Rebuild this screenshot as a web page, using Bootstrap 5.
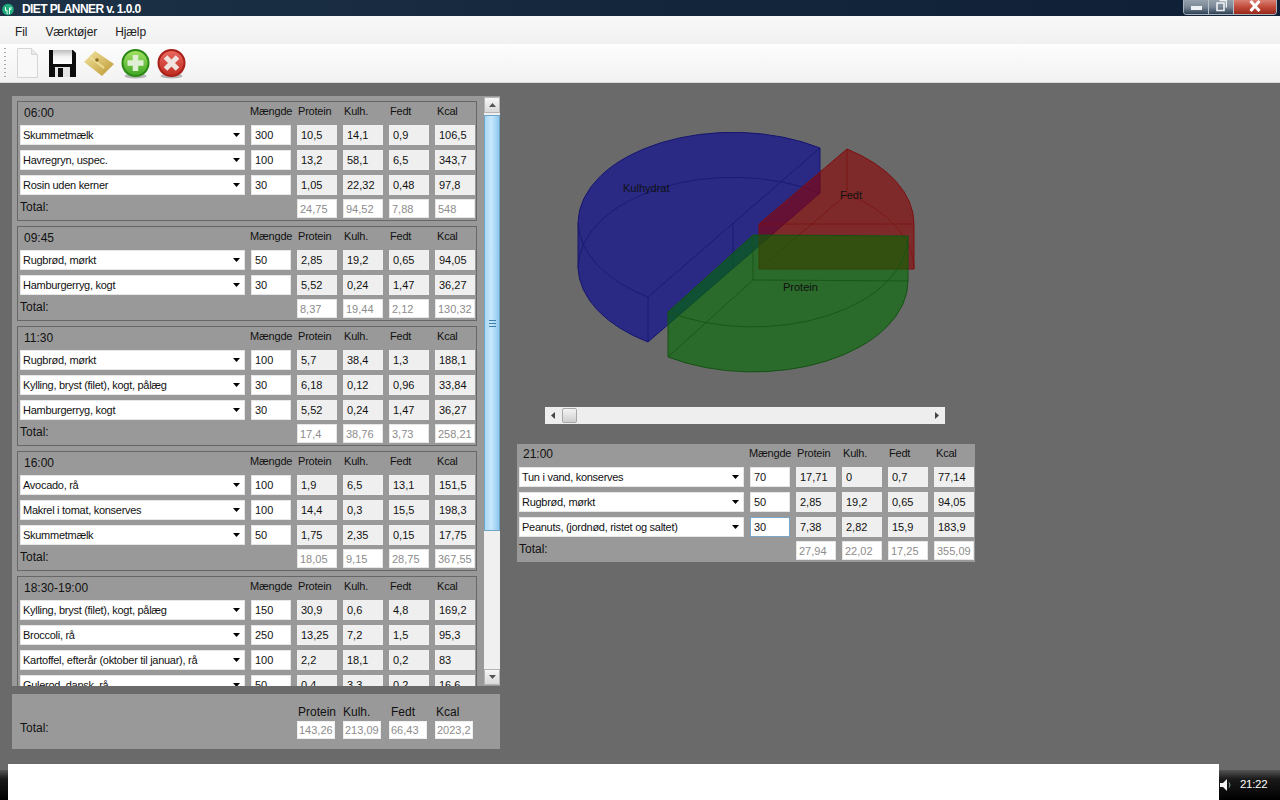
<!DOCTYPE html>
<html lang="da">

<head>
  <meta charset="UTF-8" />
  <title>DIET PLANNER v. 1.0.0</title>
  <link href="https://cdn.jsdelivr.net/npm/bootstrap@5.3.3/dist/css/bootstrap.min.css" rel="stylesheet">

  <style>
    body {
      width: 1280px;
      height: 800px;
      overflow: hidden;
      background-color: #6a6a6a;
      font-family: "Liberation Sans", Arial, sans-serif;
      font-size: 11px;
      color: #111;
    }

    /* window chrome */
    .title-strip {
      height: 16px;
      background: linear-gradient(90deg, #1d3246, #14263c 50%, #0f2036);
      color: #fff;
      font-size: 12px;
      font-weight: 700;
      letter-spacing: -.6px;
      line-height: 18px;
      padding-left: 2px;
    }

    .win-btns {
      height: 15px;
      margin-right: 3px;
      border: 1px solid #a9b2bb;
      border-top: 0;
      border-radius: 0 0 4px 4px;
      overflow: hidden;
    }

    .win-btn {
      width: 25px;
      background: linear-gradient(#95a0ab, #7b8896 50%, #2f4156);
      border-right: 1px solid #b8c0c8;
    }

    .win-close {
      width: 42px;
      border-right: 0;
      background: linear-gradient(#d98073, #c24b3a 50%, #98281b);
    }

    .menu-strip {
      height: 28px;
      background: linear-gradient(#f8f8f8, #f1f1f1);
      font-size: 12px;
      letter-spacing: -.1px;
      padding: 4px 0 0 15px;
      gap: 18px;
      color: #222;
    }

    .tool-strip {
      height: 39px;
      padding-left: 4px;
      background: linear-gradient(#fdfdfd, #f2f2f2);
      border-bottom: 1px solid #d8d8d8;
    }

    .tool-grip {
      width: 2px;
      height: 30px;
      margin-right: 10px;
      background: repeating-linear-gradient(#a8a8a8 0 1px, transparent 1px 4px);
    }

    .tool-gap {
      margin-right: 6px;
    }

    /* panels */
    .main-area {
      height: 687px;
      padding: 13px 0 0 12px;
    }

    .meal-scroll {
      width: 488px;
      height: 590px;
      background: #999;
      overflow: hidden;
    }

    .meal-list {
      width: 471px;
      padding: 5px 0 0 5px;
    }

    .meal-box {
      width: 460px;
      margin-bottom: 5px;
      padding: 0 1px 2px 2px;
      border: 1px solid #676767;
    }

    .meal-open {
      width: 458px;
      height: 118px;
      padding: 0 0 1px 2px;
      background: #999;
    }

    .meal-head,
    .meal-row {
      display: grid;
      grid-template-columns: 225px repeat(5, 40px);
      column-gap: 6px;
    }

    .meal-head {
      height: 23px;
      line-height: 18px;
      letter-spacing: -.2px;
      white-space: nowrap;
    }

    .meal-head span+span {
      padding-left: 1px;
    }

    .meal-head span:nth-child(2) {
      margin-left: -2px;
    }

    .meal-head span:last-child {
      padding-left: 2px;
    }

    .time-label {
      font-size: 12px;
      letter-spacing: 0;
      line-height: 23px;
      padding-left: 4px;
    }

    .meal-open .time-label {
      line-height: 21px;
    }

    .meal-row {
      margin-bottom: 5px;
    }

    .meal-total {
      margin-top: -1px;
      margin-bottom: 0;
    }

    .total-label {
      font-size: 12px;
      line-height: 17px;
    }

    .food-pick,
    .num-cell {
      height: 20px;
      padding: 0 3px;
      border: 1px solid #e6e6e6;
      border-radius: 0;
      font-size: 11px;
      line-height: 18px;
      color: #111;
      box-shadow: none;
    }

    .food-pick {
      padding: 0 14px 0 2px;
      letter-spacing: -.28px;
      background-color: #fff;
      background-image: url("data:image/svg+xml,%3Csvg xmlns='http://www.w3.org/2000/svg' width='7' height='4'%3E%3Cpath d='M0 0h7L3.500 4z'/%3E%3C/svg%3E");
      background-size: 7px 4px;
      background-position: right 4px center;
      background-repeat: no-repeat;
    }

    .num-cell {
      background: #fff;
    }

    .num-cell.calc {
      background: #efefef;
      border-color: #f0f0f0;
    }

    .num-cell.sum,
    .grand-cell {
      height: 19px;
      padding: 0 2px;
      background: #fff;
      color: #8c8c8c;
    }

    .num-cell.active {
      border-color: #7aa6c9;
    }

    /* scroll bars */
    .v-scroll {
      width: 16px;
      height: 588px;
      margin: 1px 0 0 1px;
      background: #f0f0f0;
    }

    .scroll-btn {
      height: 16px;
      background: linear-gradient(#f7f7f7, #d9d9d9);
      border: 1px solid #b5b5b5;
      color: #555;
    }

    .v-thumb {
      height: 416px;
      margin-top: 2px;
      background: linear-gradient(90deg, #a9d7f4, #c7e7fb 45%, #8fc8ee);
      border: 1px solid #6fa5c8;
    }

    .h-scroll {
      width: 400px;
      height: 17px;
      margin: 14px 0 20px 28px;
      background: #eeeeee;
      color: #333;
      padding: 0 6px;
    }

    .h-thumb {
      width: 15px;
      height: 15px;
      margin-left: 7px;
      border: 1px solid #a8a8a8;
      border-radius: 2px;
      background: linear-gradient(#f4f4f4, #cfcfcf);
    }

    .grand-box {
      width: 488px;
      height: 55px;
      margin-top: 8px;
      padding: 10px 0 0 8px;
      background: #999;
      font-size: 12px;
    }

    .grand-grid {
      display: grid;
      grid-template-columns: repeat(4, 38px);
      column-gap: 8px;
      align-self: flex-start;
      margin-left: auto;
      margin-right: 27px;
      line-height: 17px;
    }

    .grand-grid span {
      padding-left: 1px;
    }

    .grand-grid span:nth-child(2) {
      padding-left: 0;
    }

    .grand-grid span:nth-child(3) {
      padding-left: 2px;
    }

    .grand-cell {
      height: 18px;
      padding: 0 1px;
      border: 1px solid #eee;
      border-radius: 0;
      font-size: 11px;
      line-height: 16px;
    }

    .grand-name {
      margin-top: 16px;
    }

    .chart-col {
      margin-left: 17px;
    }

    .pie-chart {
      display: block;
      margin: 13px 0 0 28px;
    }

    .pie-chart text {
      font-family: "Liberation Sans", Arial, sans-serif;
      font-size: 11px;
      fill: #111;
    }

    /* task bar */
    .task-strip {
      height: 30px;
      background: linear-gradient(#555, #1a1a1a 30%, #000);
      color: #fff;
      font-size: 11.5px;
      letter-spacing: -.3px;
    }

    .blank-strip {
      width: 1211px;
      height: 36px;
      margin: -6px 0 0 8px;
      background: #fff;
    }

    .speaker-gap {
      margin: 0 8px 0 1px;
    }
  </style>
</head>

<body>
  <!-- title bar -->
  <div class="title-strip d-flex align-items-start justify-content-between">
    <div class="d-flex align-items-center gap-2">
      <svg width="12" height="14" viewBox="0 0 12 14">
        <circle cx="6" cy="7.500" r="5.800" fill="#1fae7c" />
        <path d="M3.500 5v3.500h1.600V12M7.500 5.500v6.500M9 5v2.500H7" fill="none" stroke="#e9fff4" stroke-width="1" />
      </svg>
      <span>DIET PLANNER v. 1.0.0</span>
    </div>
    <div class="win-btns d-flex">
      <div class="win-btn d-flex align-items-end justify-content-center pb-1">
        <svg width="11" height="4">
          <rect width="11" height="4" fill="#eef1f4" />
        </svg>
      </div>
      <div class="win-btn d-flex justify-content-center">
        <svg width="11" height="12" viewBox="0 0 11 12">
          <path d="M3.500 .5h7v7M1 3h7v7.500H1z" fill="none" stroke="#eef1f4" stroke-width="1.600" />
        </svg>
      </div>
      <div class="win-btn win-close d-flex justify-content-center">
        <svg width="14" height="12" viewBox="0 0 14 12">
          <path d="M2.500 1l9 10M11.500 1l-9 10" fill="none" stroke="#fff" stroke-width="3" />
        </svg>
      </div>
    </div>
  </div>

  <!-- menu -->
  <div class="menu-strip d-flex align-items-center">
    <span>Fil</span>
    <span>Værktøjer</span>
    <span>Hjælp</span>
  </div>

  <!-- toolbar -->
  <div class="tool-strip d-flex align-items-center">
    <div class="tool-grip"></div>
    <svg width="24" height="32" viewBox="0 0 24 32" class="me-2">
      <defs>
        <linearGradient id="labelFill" x1="0" y1="0" x2="0" y2="1">
          <stop offset="0" stop-color="#bdbdbd" />
          <stop offset=".5" stop-color="#f4f4f4" />
          <stop offset="1" stop-color="#fff" />
        </linearGradient>
      </defs>
      <path d="M1.500 1.500h14l6 6v23h-20z" fill="#f8f8f8" stroke="#d6d6d6" />
      <path d="M15.500 1.500v6h6" fill="#e8e8e8" stroke="#d6d6d6" />
    </svg>
    <svg width="30" height="32" viewBox="0 0 30 32" class="tool-gap">
      <path d="M1 3h24l3 3v24H1z" fill="#0d0d0d" />
      <rect x="5" y="3" width="19" height="14" fill="url(#labelFill)" />
      <rect x="7" y="20" width="15" height="10" fill="#e5e5e5" />
      <rect x="10" y="21" width="5" height="9" fill="#111" />
    </svg>
    <svg width="31" height="30" viewBox="0 0 31 30" class="tool-gap">
      <defs>
        <linearGradient id="tagFill" x1="0" y1="0" x2="1" y2="1">
          <stop offset="0" stop-color="#f4e49f" />
          <stop offset="1" stop-color="#bb9833" />
        </linearGradient>
      </defs>
      <path d="M0 14L11 3l19 13-12 12z" fill="url(#tagFill)" />
      <path d="M6 9l14 11" stroke="#ecdc97" stroke-width="2" />
      <circle cx="13" cy="12" r="1.800" fill="#8c6f1e" />
    </svg>
    <svg width="30" height="32" viewBox="0 0 30 32" class="tool-gap">
      <defs>
        <linearGradient id="okFill" x1="0" y1="0" x2="0" y2="1">
          <stop offset="0" stop-color="#a5e265" />
          <stop offset="1" stop-color="#3fa524" />
        </linearGradient>
      </defs>
      <ellipse cx="14.500" cy="29" rx="11" ry="2.500" fill="#b5b5b5" />
      <circle cx="14.500" cy="16" r="13" fill="url(#okFill)" stroke="#2a8a14" stroke-width="2" />
      <path d="M14.500 8v16M6.500 16h16" stroke="#dfefd4" stroke-width="5.500" />
    </svg>
    <svg width="30" height="32" viewBox="0 0 30 32">
      <defs>
        <linearGradient id="noFill" x1="0" y1="0" x2="0" y2="1">
          <stop offset="0" stop-color="#ea6a60" />
          <stop offset="1" stop-color="#bf2a20" />
        </linearGradient>
      </defs>
      <ellipse cx="14.500" cy="29" rx="11" ry="2.500" fill="#b5b5b5" />
      <circle cx="14.500" cy="16" r="13" fill="url(#noFill)" stroke="#a82019" stroke-width="2" />
      <path d="M8.500 10l12 12M20.500 10l-12 12" stroke="#f0e2df" stroke-width="5" />
    </svg>
  </div>

  <div class="main-area d-flex align-items-start">
    <div>
      <div class="meal-scroll d-flex align-items-start">
        <div class="meal-list" id="meal-list"></div>
        <div class="v-scroll d-flex flex-column">
          <div class="scroll-btn d-flex align-items-center justify-content-center">
            <svg width="7" height="4"><path d="M3.500 0L7 4H0z" fill="#555" /></svg>
          </div>
          <div class="v-thumb d-flex align-items-center justify-content-center">
            <svg width="7" height="7"><path d="M0 .5h7M0 3.500h7M0 6.500h7" stroke="#3f7ea8" /></svg>
          </div>
          <div class="scroll-btn d-flex align-items-center justify-content-center mt-auto">
            <svg width="7" height="4"><path d="M3.500 4L7 0H0z" fill="#555" /></svg>
          </div>
        </div>
      </div>
      <div class="grand-box d-flex">
        <div class="grand-name total-label">Total:</div>
        <div class="grand-grid">
          <span>Protein</span><span>Kulh.</span><span>Fedt</span><span>Kcal</span>
          <div class="grand-cell">143,26</div>
          <div class="grand-cell">213,09</div>
          <div class="grand-cell">66,43</div>
          <div class="grand-cell">2023,2</div>
        </div>
      </div>
    </div>

    <div class="chart-col">
      <svg class="pie-chart" width="400" height="284" viewBox="545 109 400 284">
        <g stroke="#16166e" stroke-width="1">
          <path d="M820 148A155 91 0 0 0 578 223L578 268A155 91 0 0 0 648 342L820 193Z" fill="rgb(0,0,152)" fill-opacity=".6" />
          <path d="M648 297L820 148M648 297V342M578 223A155 91 0 0 0 648 297M820 193A155 91 0 0 0 578 268M733 223V268" fill="none" stroke-opacity=".8" />
        </g>
        <g stroke="#7c1010" stroke-width="1">
          <path d="M759 224L847 149A155 91 0 0 1 914 224V269H759Z" fill="rgb(141,0,0)" fill-opacity=".6" />
          <path d="M759 224H914M847 149V194M847 194A155 91 0 0 1 914 269M847 194L759 269" fill="none" stroke-opacity=".7" />
        </g>
        <g stroke="#145214" stroke-width="1">
          <path d="M753 235L908 236V281A155 91 0 0 1 668 357V312Z" fill="rgb(0,107,0)" fill-opacity=".6" />
          <path d="M908 236A155 91 0 0 1 668 312M753 235V280L908 281M753 280L668 357" fill="none" stroke-opacity=".8" />
        </g>
        <text x="623" y="192">Kulhydrat</text>
        <text x="840" y="199">Fedt</text>
        <text x="783" y="291">Protein</text>
      </svg>
      <div class="h-scroll d-flex align-items-center">
        <svg width="4" height="7"><path d="M0 3.500L4 0V7z" fill="#444" /></svg>
        <div class="h-thumb"></div>
        <svg width="4" height="7" class="ms-auto"><path d="M4 3.500L0 0V7z" fill="#444" /></svg>
      </div>
      <div class="meal-open" id="meal-open"></div>
    </div>
  </div>

  <!-- task bar with the blank area over it -->
  <div class="task-strip d-flex align-items-center">
    <div class="blank-strip align-self-start"></div>
    <svg width="12" height="14" viewBox="0 0 12 14" class="speaker-gap">
      <path d="M0 5h3l4-4v12L3 9H0z" fill="#f2f2f2" />
      <path d="M9 4.500q2 2.500 0 5" fill="none" stroke="#7fa98a" />
    </svg>
    <span>21:22</span>
  </div>

  <script src="https://cdn.jsdelivr.net/npm/bootstrap@5.3.3/dist/js/bootstrap.bundle.min.js"></script>

  <script>
    const meals = [
      { time: "06:00", rows: [
        ["Skummetmælk", "300", "10,5", "14,1", "0,9", "106,5"],
        ["Havregryn, uspec.", "100", "13,2", "58,1", "6,5", "343,7"],
        ["Rosin uden kerner", "30", "1,05", "22,32", "0,48", "97,8"]
      ], total: ["24,75", "94,52", "7,88", "548"] },
      { time: "09:45", rows: [
        ["Rugbrød, mørkt", "50", "2,85", "19,2", "0,65", "94,05"],
        ["Hamburgerryg, kogt", "30", "5,52", "0,24", "1,47", "36,27"]
      ], total: ["8,37", "19,44", "2,12", "130,32"] },
      { time: "11:30", rows: [
        ["Rugbrød, mørkt", "100", "5,7", "38,4", "1,3", "188,1"],
        ["Kylling, bryst (filet), kogt, pålæg", "30", "6,18", "0,12", "0,96", "33,84"],
        ["Hamburgerryg, kogt", "30", "5,52", "0,24", "1,47", "36,27"]
      ], total: ["17,4", "38,76", "3,73", "258,21"] },
      { time: "16:00", rows: [
        ["Avocado, rå", "100", "1,9", "6,5", "13,1", "151,5"],
        ["Makrel i tomat, konserves", "100", "14,4", "0,3", "15,5", "198,3"],
        ["Skummetmælk", "50", "1,75", "2,35", "0,15", "17,75"]
      ], total: ["18,05", "9,15", "28,75", "367,55"] },
      { time: "18:30-19:00", rows: [
        ["Kylling, bryst (filet), kogt, pålæg", "150", "30,9", "0,6", "4,8", "169,2"],
        ["Broccoli, rå", "250", "13,25", "7,2", "1,5", "95,3"],
        ["Kartoffel, efterår (oktober til januar), rå", "100", "2,2", "18,1", "0,2", "83"],
        ["Gulerod, dansk, rå", "50", "0,4", "3,3", "0,2", "16,6"]
      ], total: [] }
    ];

    const lastMeal = { time: "21:00", rows: [
      ["Tun i vand, konserves", "70", "17,71", "0", "0,7", "77,14"],
      ["Rugbrød, mørkt", "50", "2,85", "19,2", "0,65", "94,05"],
      ["Peanuts, (jordnød, ristet og saltet)", "30", "7,38", "2,82", "15,9", "183,9"]
    ], total: ["27,94", "22,02", "17,25", "355,09"] };

    function mealHtml(meal, markLast) {
      let html = `<div class="meal-head"><span class="time-label">${meal.time}</span>`;
      for (const name of ["Mængde", "Protein", "Kulh.", "Fedt", "Kcal"]) html += `<span>${name}</span>`;
      html += `</div>`;
      meal.rows.forEach((r, i) => {
        const active = markLast && i === meal.rows.length - 1 ? " active" : "";
        html += `<div class="meal-row">
          <select class="form-select food-pick"><option>${r[0]}</option></select>
          <input class="form-control num-cell${active}" value="${r[1]}">
          ${r.slice(2).map(v => `<input class="form-control num-cell calc" readonly value="${v}">`).join("")}
        </div>`;
      });
      // the last meal on the list runs below the fold, so it shows no total
      if (meal.total.length) {
        html += `<div class="meal-row meal-total"><div class="total-label">Total:</div><div></div>
          ${meal.total.map(v => `<input class="form-control num-cell sum" readonly value="${v}">`).join("")}
        </div>`;
      }
      return html;
    }

    document.getElementById("meal-list").innerHTML =
      meals.map(m => `<div class="meal-box">${mealHtml(m)}</div>`).join("");
    document.getElementById("meal-open").innerHTML = mealHtml(lastMeal, true);
  </script>
</body>

</html>
